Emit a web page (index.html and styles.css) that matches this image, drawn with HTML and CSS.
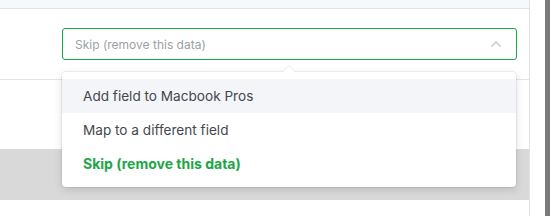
FILE: index.html
```html
<!DOCTYPE html>
<html lang="en">
<head>
    <meta charset="UTF-8">
    <meta name="viewport" content="width=device-width, initial-scale=1.0">
    <title>Field mapping</title>
    <link rel="stylesheet" href="styles.css">
</head>
<body>

<div class="page">
    <div class="panel">
        <div class="panel-top"></div>

        <!-- Mapping row with open select -->
        <div class="map-row">
            <div class="select-wrap">
                <button class="select-box" aria-expanded="true" aria-controls="map-menu">
                    <span class="select-placeholder">Skip (remove this data)</span>
                    <svg class="select-chevron" width="12" height="8" viewBox="0 0 12 8" aria-hidden="true">
                        <path d="M1.5 6.5 L6 2 L10.5 6.5" fill="none" stroke="#c4c7cc" stroke-width="1.4"/>
                    </svg>
                </button>
                <ul class="select-menu" id="map-menu" role="listbox">
                    <li class="menu-item is-active">Add field to Macbook Pros</li>
                    <li class="menu-item">Map to a different field</li>
                    <li class="menu-item menu-skip">Skip (remove this data)</li>
                </ul>
            </div>
        </div>

        <div class="map-row-empty"></div>
        <div class="grey-band"></div>
    </div>
    <div class="scroll-track"></div>
</div>

</body>
</html>
```

FILE: styles.css
```css
body {
    margin: 0;
    font-family: Inter, "Noto Sans", "Liberation Sans", sans-serif;
    background-color: #fff;
    color: #3c4047;
    overflow: hidden;
}
.page {
    display: flex;
    width: 550px;
    height: 216px;
}
.panel {
    width: 529px;
    border-right: 1px solid #dfe3e8;
    display: flex;
    flex-direction: column;
}
.panel-top {
    height: 8px;
    background-color: #f6f9fc;
    border-bottom: 1px solid #dfe3e8;
}
.map-row {
    height: 51px;
    padding-top: 19px;
    border-bottom: 1px solid #e2e5e9;
}
.select-wrap {
    position: relative;
    margin-left: 62px;
    width: 455px;
}
.select-box {
    width: 100%;
    height: 32px;
    display: flex;
    align-items: center;
    justify-content: space-between;
    padding: 0 14px 0 12px;
    background: #fff;
    border: 1px solid #1ca647;
    border-radius: 3px;
    font-family: inherit;
    cursor: pointer;
}
.select-placeholder {
    font-size: 12px;
    color: #9b9fa6;
}
.select-chevron {
    flex-shrink: 0;
}

/* Dropdown menu, sits over the rows below */
.select-menu {
    position: absolute;
    top: 44px;
    left: 0;
    width: 454px;
    margin: 0;
    padding: 7px 0 6px;
    list-style: none;
    background: #fff;
    border-radius: 4px;
    box-shadow: 0 0 0 1px rgba(0,0,0,0.06), 0 3px 9px rgba(0,0,0,0.13);
    z-index: 2;
}
.select-menu::before {
    content: '';
    position: absolute;
    top: -4px;
    left: 223px;
    width: 8px;
    height: 8px;
    background: #fff;
    transform: rotate(45deg);
    box-shadow: -1px -1px 0 rgba(0,0,0,0.06);
}
.menu-item {
    position: relative;
    height: 34px;
    line-height: 34px;
    padding-left: 21px;
    font-size: 13.6px;
    color: #43474e;
}
.menu-item.is-active {
    background-color: #f4f5f8;
}
.menu-skip {
    font-size: 14px;
    font-weight: 700;
    color: #1ca647;
}

.map-row-empty {
    height: 69px;
}
.grey-band {
    height: 51px;
    background-color: #d9d9d9;
}
.scroll-track {
    width: 5px;
    margin-left: 15px;
    background-color: #7b7b7b;
}
```
